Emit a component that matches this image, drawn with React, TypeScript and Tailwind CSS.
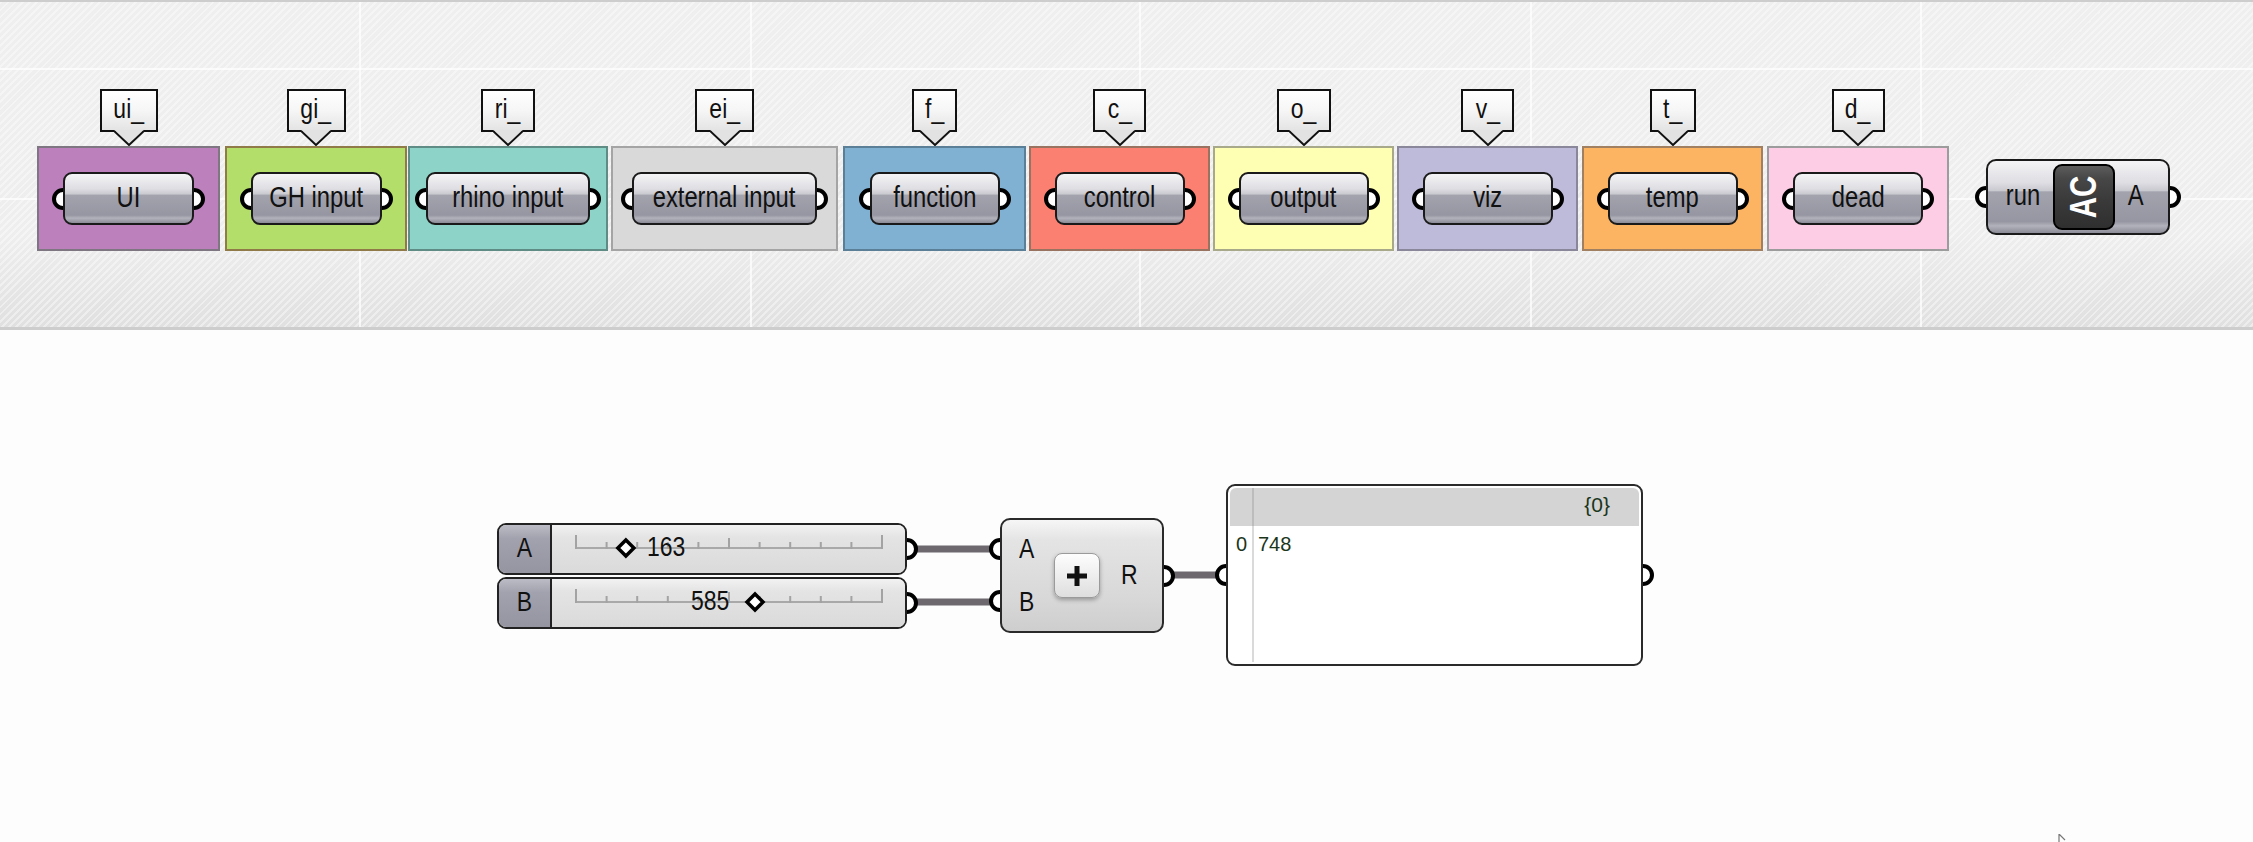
import React from "react";

const SANS = "font-['Liberation_Sans',Arial,sans-serif]";

const CAPSULE_BG =
  "bg-[linear-gradient(to_bottom,#f4f4f6_0%,#dedee3_30%,#c9c9d0_41%,#a3a3ae_43%,#9696a2_84%,#b2b2bc_90%,#8c8c98_100%)]";

const groups = [
  { tip: "ui_", tw: "w-[58px]", label: "UI", ml: "ml-0", w: "w-[183px]", cap: "w-[131px]", bg: "bg-[#bc80bd]", bd: "border-[#7e7782]" },
  { tip: "gi_", tw: "w-[59px]", label: "GH input", ml: "ml-[5px]", w: "w-[182px]", cap: "w-[131px]", bg: "bg-[#b3de69]", bd: "border-[#8f7a48]" },
  { tip: "ri_", tw: "w-[54px]", label: "rhino input", ml: "ml-[1px]", w: "w-[200px]", cap: "w-[164px]", bg: "bg-[#8dd3c7]", bd: "border-[#5f8c85]" },
  { tip: "ei_", tw: "w-[59px]", label: "external input", ml: "ml-[3px]", w: "w-[227px]", cap: "w-[185px]", bg: "bg-[#d9d9d9]", bd: "border-[#a4a4a4]" },
  { tip: "f_", tw: "w-[45px]", label: "function", ml: "ml-[5px]", w: "w-[183px]", cap: "w-[130px]", bg: "bg-[#80b1d3]", bd: "border-[#5a7f96]" },
  { tip: "c_", tw: "w-[53px]", label: "control", ml: "ml-[3px]", w: "w-[181px]", cap: "w-[130px]", bg: "bg-[#fb8072]", bd: "border-[#9a7260]" },
  { tip: "o_", tw: "w-[54px]", label: "output", ml: "ml-[3px]", w: "w-[181px]", cap: "w-[130px]", bg: "bg-[#ffffb3]", bd: "border-[#a8a88a]" },
  { tip: "v_", tw: "w-[53px]", label: "viz", ml: "ml-[3px]", w: "w-[181px]", cap: "w-[130px]", bg: "bg-[#bebada]", bd: "border-[#8a879a]" },
  { tip: "t_", tw: "w-[46px]", label: "temp", ml: "ml-[4px]", w: "w-[181px]", cap: "w-[130px]", bg: "bg-[#fdb462]", bd: "border-[#a08060]" },
  { tip: "d_", tw: "w-[53px]", label: "dead", ml: "ml-[4px]", w: "w-[182px]", cap: "w-[130px]", bg: "bg-[#fccde5]", bd: "border-[#9c9c9c]" },
];

// condensed text: Liberation Sans squeezed to the width of Arial Narrow
function N({ children, origin = "origin-center" }: { children: React.ReactNode; origin?: string }) {
  return <span className={`inline-block whitespace-nowrap scale-x-[0.82] ${origin}`}>{children}</span>;
}

function Port({ side }: { side: "l" | "r" }) {
  return (
    <span
      className={
        side === "l"
          ? "absolute -left-[11px] top-1/2 -translate-y-1/2 w-[22px] h-[22px] rounded-full border-[4px] border-black bg-white"
          : "absolute -right-[11px] top-1/2 -translate-y-1/2 w-[22px] h-[22px] rounded-full border-[4px] border-black bg-white"
      }
    />
  );
}

function Tooltip({ text, w }: { text: string; w: string }) {
  return (
    <div
      className={`relative mb-[14px] h-[43px] ${w} flex items-center justify-center border-2 border-[#111] bg-[linear-gradient(to_bottom,#ffffff_0%,#f6f6f6_50%,#e4e4e4_100%)] text-[28px] leading-none text-[#111] ${SANS}`}
    >
      <span className="-mt-[3px]">
        <N>{text}</N>
      </span>
      <svg className="absolute left-1/2 -translate-x-1/2 top-full" width="30" height="16" viewBox="0 0 30 16">
        <polygon points="0,0 30,0 15,15" fill="#e2e2e2" />
        <polyline points="0,1 15,15 30,1" fill="none" stroke="#111" strokeWidth="2" />
      </svg>
    </div>
  );
}

function Capsule({ label, w }: { label: string; w: string }) {
  return (
    <div className={`relative h-[53px] ${w}`}>
      <Port side="l" />
      <Port side="r" />
      <div
        className={`relative z-10 h-full rounded-[9px] border-2 border-[#1a1a1a] ${CAPSULE_BG} flex items-center justify-center text-[29px] leading-none text-[#111] ${SANS}`}
      >
        <span className="-mt-[3px]">
          <N>{label}</N>
        </span>
      </div>
    </div>
  );
}

function RunComponent() {
  return (
    <div className="relative ml-[37px] mt-[70px] w-[184px] h-[76px]">
      <Port side="l" />
      <Port side="r" />
      <div
        className={`relative z-10 h-full rounded-[10px] border-2 border-[#1a1a1a] ${CAPSULE_BG} flex items-center text-[29px] leading-none text-[#111] ${SANS}`}
      >
        <span className="w-[65px] pl-[5px] text-center -mt-[3px]">
          <N>run</N>
        </span>
        <div className="w-[62px] h-[66px] rounded-[9px] border-2 border-black bg-[linear-gradient(to_bottom,#5c5c5c_0%,#474747_20%,#3a3a3a_55%,#2f2f2f_100%)] flex items-center justify-center">
          <span className="-rotate-90 text-white font-bold text-[36px] leading-none">
            <N>AC</N>
          </span>
        </div>
        <span className="flex-1 pr-[12px] text-center -mt-[3px]">
          <N>A</N>
        </span>
      </div>
    </div>
  );
}

function Band() {
  const vlines = ["left-[359px]", "left-[750px]", "left-[1139px]", "left-[1530px]", "left-[1920px]"];
  return (
    <div className="relative h-[330px] border-t-2 border-b-[3px] border-[#cdcdcd] bg-[repeating-linear-gradient(135deg,rgba(255,255,255,0.4)_0px,rgba(255,255,255,0.4)_2px,rgba(0,0,0,0)_2px,rgba(0,0,0,0)_5px),linear-gradient(to_bottom,#efefef_0%,#eeeeee_72%,#e0e0e0_100%)]">
      <div className="absolute left-0 right-0 top-[66px] h-[2px] bg-white/70" />
      <div className="absolute left-0 right-0 top-[196px] h-[2px] bg-white/70" />
      {vlines.map((l) => (
        <div key={l} className={`absolute top-0 bottom-0 w-[2px] bg-white/70 ${l}`} />
      ))}
      <div className="relative flex items-start pl-[37px] pt-[87px]">
        {groups.map((g) => (
          <div key={g.tip} className={`flex flex-col items-center ${g.ml}`}>
            <Tooltip text={g.tip} w={g.tw} />
            <div className={`h-[105px] ${g.w} ${g.bg} border-2 ${g.bd} flex items-center justify-center`}>
              <Capsule label={g.label} w={g.cap} />
            </div>
          </div>
        ))}
        <RunComponent />
      </div>
    </div>
  );
}

function Slider({ name, value, textPos }: { name: string; value: number; textPos: string }) {
  const ticks = Array.from({ length: 11 }, (_, i) => 24 + i * 30.6);
  const cx = 24 + (value / 1000) * 306;
  return (
    <div className="relative w-[410px] h-[52px]">
      <Port side="r" />
      <div className={`relative z-10 h-full rounded-[9px] border-2 border-[#222] overflow-hidden flex text-[28px] leading-none text-[#111] ${SANS}`}>
        <div className="w-[53px] border-r-2 border-[#222] bg-[linear-gradient(to_bottom,#bcbcc6_0%,#a2a2ae_28%,#9595a1_100%)] flex items-center justify-center">
          <span className="-mt-[3px]">
            <N>{name}</N>
          </span>
        </div>
        <div className="relative flex-1 bg-[linear-gradient(to_bottom,#f2f2f2_0%,#e4e4e4_25%,#dadada_100%)]">
          <svg className="absolute left-0 top-0" width="353" height="48" viewBox="0 0 353 48">
            <line x1="24" y1="23" x2="330" y2="23" stroke="#a9a9a9" strokeWidth="2" />
            {ticks.map((x, i) => (
              <line
                key={i}
                x1={x}
                x2={x}
                y1={i === 0 || i === 10 ? 10 : i === 5 ? 13 : 17}
                y2={24}
                stroke="#a3a3a3"
                strokeWidth="2"
              />
            ))}
            <polygon
              points={`${cx},15 ${cx + 8},23 ${cx},31 ${cx - 8},23`}
              fill="#fff"
              stroke="#000"
              strokeWidth="3.5"
            />
          </svg>
          <span className={`absolute top-[8px] ${textPos}`}>
            <N origin="origin-left">{value}</N>
          </span>
        </div>
      </div>
    </div>
  );
}

function Addition() {
  return (
    <div className="absolute left-[1000px] top-[188px] w-[164px] h-[115px]">
      <span className="absolute -left-[11px] top-[20px] w-[22px] h-[22px] rounded-full border-[4px] border-black bg-white" />
      <span className="absolute -left-[11px] top-[72px] w-[22px] h-[22px] rounded-full border-[4px] border-black bg-white" />
      <Port side="r" />
      <div
        className={`relative z-10 h-full rounded-[10px] border-2 border-[#2a2a2a] bg-[linear-gradient(to_bottom,#f6f6f6_0%,#e4e4e4_18%,#d8d8d8_70%,#cecece_100%)] flex items-center text-[28px] leading-none text-[#111] ${SANS}`}
      >
        <div className="w-[52px] h-full pl-[17px] py-[15px] flex flex-col justify-between">
          <N origin="origin-left">A</N>
          <N origin="origin-left">B</N>
        </div>
        <div className="w-[46px] h-[45px] rounded-[8px] border-[1.5px] border-[#9a9a9a] bg-[linear-gradient(to_bottom,#fdfdfd_0%,#eeeeee_50%,#dedede_100%)] shadow-[0_2px_4px_rgba(0,0,0,0.3)] flex items-center justify-center">
          <svg width="22" height="22" viewBox="0 0 22 22">
            <rect x="8.5" y="1" width="5" height="20" fill="#111" />
            <rect x="1" y="8.5" width="20" height="5" fill="#111" />
          </svg>
        </div>
        <span className="ml-[21px] -mt-[2px]">
          <N origin="origin-left">R</N>
        </span>
      </div>
    </div>
  );
}

function Panel() {
  return (
    <div className="absolute left-[1226px] top-[154px] w-[417px] h-[182px]">
      <Port side="l" />
      <Port side="r" />
      <div className={`relative z-10 h-full rounded-[9px] border-2 border-[#2a2a2a] bg-white p-[2px] flex text-[#1b361b] ${SANS}`}>
        <div className="w-[22px] flex flex-col">
          <div className="h-[38px] rounded-tl-[6px] bg-[#d4d4d4]" />
          <span className="pt-[8px] pl-[6px] text-[20px] leading-none">0</span>
        </div>
        <div className="w-[2px] flex flex-col">
          <div className="h-[38px] bg-[#bcbcbc]" />
          <div className="flex-1 bg-[#dadada]" />
        </div>
        <div className="flex-1 flex flex-col">
          <div className="h-[38px] rounded-tr-[6px] bg-[#d4d4d4] flex items-center justify-end pr-[29px]">
            <span className="text-[21px] leading-none -mt-[6px]">{"{0}"}</span>
          </div>
          <span className="pt-[8px] pl-[4px] text-[20px] leading-none">748</span>
        </div>
      </div>
    </div>
  );
}

function Canvas() {
  return (
    <div className="relative flex-1">
      <svg className="absolute left-0 top-0" width="2253" height="512" viewBox="0 0 2253 512">
        <path d="M912 219 L996 219" stroke="#6d686d" strokeWidth="7" fill="none" />
        <path d="M912 272 L996 272" stroke="#6d686d" strokeWidth="7" fill="none" />
        <path d="M1166 245 L1220 245" stroke="#6d686d" strokeWidth="7" fill="none" />
      </svg>
      <div className="absolute left-[497px] top-[193px] flex flex-col gap-[2px]">
        <Slider name="A" value={163} textPos="left-[95px]" />
        <Slider name="B" value={585} textPos="left-[139px]" />
      </div>
      <Addition />
      <Panel />
      <svg className="absolute left-[2058px] top-[504px]" width="10" height="8" viewBox="0 0 10 8">
        <path d="M1 0 L1 8 M1 0 L7 6" stroke="#777" strokeWidth="1.2" fill="none" />
      </svg>
    </div>
  );
}

export default function App() {
  return (
    <div className="w-[2253px] h-[842px] overflow-hidden bg-[#fdfdfd] flex flex-col">
      <Band />
      <Canvas />
    </div>
  );
}
